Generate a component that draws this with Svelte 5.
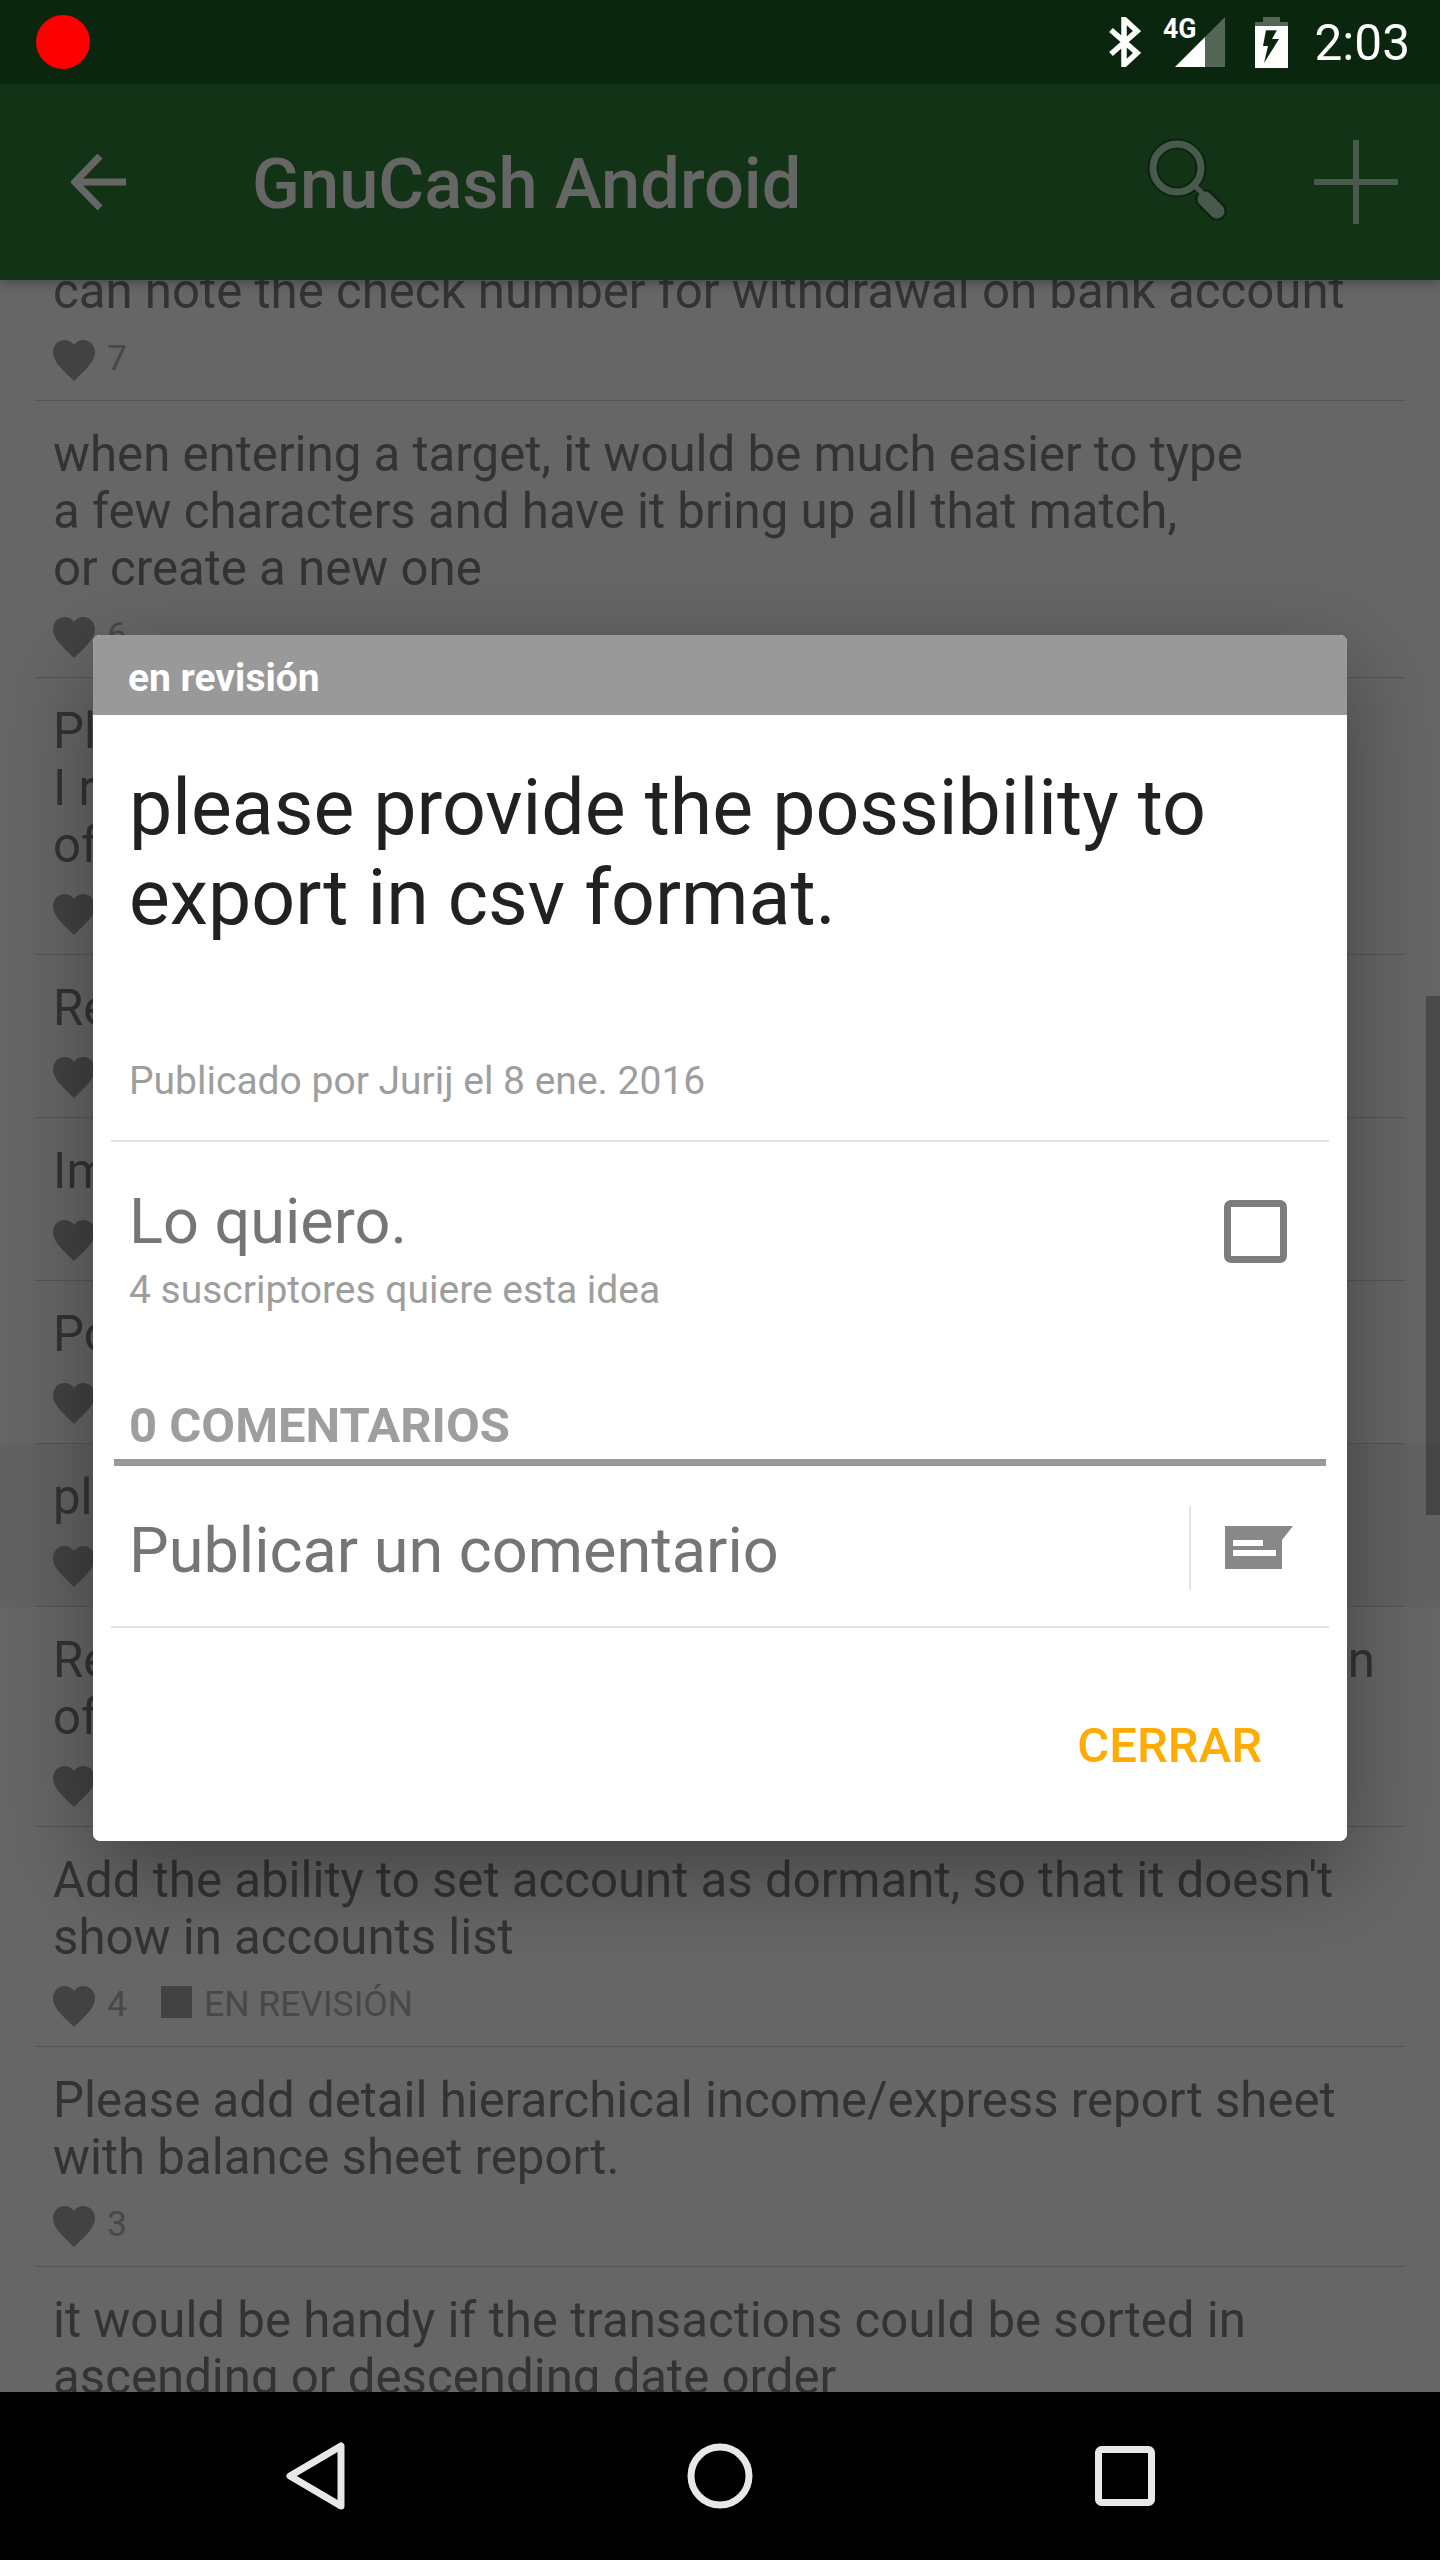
<script>
  const rows = [
    { lines: ['can note the check number for withdrawal on bank account'], votes: '7' },
    { lines: ['when entering a target, it would be much easier to type', 'a few characters and have it bring up all that match,', 'or create a new one'], votes: '6' },
    { lines: ['Pl', 'I r', 'of'] },
    { lines: ['Re'] },
    { lines: ['Im'] },
    { lines: ['Po'] },
    { lines: ['pl'], pressed: true },
    { lines: ['Re', 'of'], tail: 'n' },
    { lines: ["Add the ability to set account as dormant, so that it doesn't", 'show in accounts list'], votes: '4', status: 'EN REVISIÓN' },
    { lines: ['Please add detail hierarchical income/express report sheet', 'with balance sheet report.'], votes: '3' },
    { lines: ['it would be handy if the transactions could be sorted in', 'ascending or descending date order'] }
  ];
</script>

<div class="screen">
  <header class="status">
    <span class="rec"></span>
    <div class="status-icons">
      <svg class="bt" width="32" height="50" viewBox="0 0 32 50">
        <path d="M2 13 L28 36 L15 48 V2 L28 14 L2 37" fill="none" stroke="#fff" stroke-width="5.5" />
      </svg>
      <div class="signal">
        <span class="net">4G</span>
        <svg width="50" height="50" viewBox="0 0 50 50">
          <path d="M50 0 V50 H30 V20 Z" fill="#fff" opacity="0.3" />
          <path d="M0 50 L30 20 V50 Z" fill="#fff" />
        </svg>
      </div>
      <svg class="batt" width="33" height="51" viewBox="0 0 33 51">
        <path d="M8 0 H25 V5 H33 V14 H0 V5 H8 Z" fill="#fff" opacity="0.3" />
        <path d="M0 9 H33 V51 H0 Z M22 13 H11 L8 29 H13 L9 46 L24 22 H17 Z" fill="#fff" fill-rule="evenodd" />
      </svg>
      <span class="time">2:03</span>
    </div>
  </header>

  <div class="toolbar">
    <svg class="back" width="56" height="56" viewBox="0 0 56 56">
      <path d="M55 28 H6 M29 2 L4 28 L29 54" fill="none" stroke="#fff" stroke-width="7" />
    </svg>
    <h1>GnuCash Android</h1>
    <svg class="search" width="86" height="86" viewBox="0 0 86 86">
      <g fill="none" stroke="#1e5a28" stroke-linecap="round">
        <circle cx="32" cy="32" r="24" stroke-width="11" />
        <path d="M60 63 L72 75" stroke-width="20" />
      </g>
      <g fill="none" stroke="#b2e1bb" stroke-linecap="round">
        <circle cx="32" cy="32" r="24" stroke-width="7" />
        <path d="M50 50 L58 58" stroke-width="5" />
        <path d="M60 63 L72 75" stroke-width="15" />
      </g>
    </svg>
    <svg class="plus" width="84" height="84" viewBox="0 0 84 84">
      <path d="M42 0 V84 M0 42 H84" stroke="#b2e1bb" stroke-width="6" />
    </svg>
  </div>

  <main>
    <div class="list">
      {#each rows as row}
        <div class="row" class:pressed={row.pressed}>
          <div class="row-inner">
            {#each row.lines as line, i}
              <div class="line">
                <span>{line}</span>
                {#if row.tail && i === 0}<span>{row.tail}</span>{/if}
              </div>
            {/each}
            <div class="meta">
              <svg class="heart" width="42" height="41" viewBox="2 3 20 18.35" preserveAspectRatio="none">
                <path d="M12 21.35l-1.45-1.32C5.4 15.36 2 12.28 2 8.5 2 5.42 4.42 3 7.5 3c1.74 0 3.41.81 4.5 2.09C13.09 3.81 14.76 3 16.5 3 19.58 3 22 5.42 22 8.5c0 3.78-3.4 6.86-8.55 11.54L12 21.35z" />
              </svg>
              {#if row.votes}<span class="votes">{row.votes}</span>{/if}
              {#if row.status}
                <span class="status-square"></span>
                <span class="status-label">{row.status}</span>
              {/if}
            </div>
          </div>
        </div>
      {/each}
    </div>
    <div class="scrollbar"></div>
  </main>

  <nav>
    <svg width="60" height="70" viewBox="0 0 60 70">
      <path d="M4 35 L55 5 V65 Z" fill="none" stroke="#e8e8e8" stroke-width="7" stroke-linejoin="round" />
    </svg>
    <svg width="66" height="66" viewBox="0 0 66 66">
      <circle cx="33" cy="33" r="29" fill="none" stroke="#e8e8e8" stroke-width="7" />
    </svg>
    <svg width="60" height="60" viewBox="0 0 60 60">
      <rect x="3.5" y="3.5" width="53" height="53" rx="3" fill="none" stroke="#e8e8e8" stroke-width="7" />
    </svg>
  </nav>

  <div class="scrim">
    <section class="dialog">
      <div class="dialog-status">en revisión</div>
      <div class="dialog-title">please provide the possibility to export in csv format.</div>
      <div class="dialog-author">Publicado por Jurij el 8 ene. 2016</div>
      <div class="vote">
        <div>
          <div class="want">Lo quiero.</div>
          <div class="subs">4 suscriptores quiere esta idea</div>
        </div>
        <span class="check"></span>
      </div>
      <div class="comments-head">0 COMENTARIOS</div>
      <div class="comment-box">
        <span class="comment-input">Publicar un comentario</span>
        <span class="comment-send">
          <svg width="68" height="43" viewBox="0 0 68 43">
            <path d="M0 0 H68 L57 14 V43 H0 Z M8 14 V20 H38 V14 Z M8 24 V30 H51 V24 Z" fill="#888" fill-rule="evenodd" />
          </svg>
        </span>
      </div>
      <div class="dialog-actions">
        <span class="close">CERRAR</span>
      </div>
    </section>
  </div>
</div>

<style>
  :global(body) {
    margin: 0;
    background: #000;
  }

  .screen {
    position: relative;
    width: 1440px;
    height: 2560px;
    display: flex;
    flex-direction: column;
    overflow: hidden;
    font-family: Roboto, "Liberation Sans", sans-serif;
    background: #fff;
  }

  .status {
    position: relative;
    z-index: 3;
    height: 84px;
    flex: none;
    display: flex;
    align-items: center;
    justify-content: space-between;
    padding: 0 30px 0 36px;
    background: #0b260e;
  }

  .rec {
    width: 54px;
    height: 54px;
    border-radius: 50%;
    background: #f00;
  }

  .status-icons {
    display: flex;
    align-items: center;
  }

  .signal {
    position: relative;
    margin-left: 34px;
    width: 50px;
    height: 50px;
  }

  .signal svg {
    display: block;
  }

  .net {
    position: absolute;
    left: -12px;
    top: -1px;
    font-size: 28px;
    line-height: 26px;
    font-weight: 700;
    color: #fff;
    transform: scaleX(0.95);
    transform-origin: left;
  }

  .batt {
    margin-left: 30px;
  }

  .time {
    margin-left: 27px;
    margin-top: 2px;
    font-size: 49.5px;
    line-height: 58px;
    color: #fff;
  }

  .toolbar {
    position: relative;
    z-index: 1;
    height: 196px;
    flex: none;
    display: flex;
    align-items: center;
    background: #2f7f35;
    box-shadow: 0 2px 12px rgba(0, 0, 0, 0.35);
  }

  .back {
    margin-left: 71px;
  }

  h1 {
    margin: 4px 0 0 125px;
    flex: 1;
    font-size: 70.4px;
    line-height: 82px;
    font-weight: 500;
    color: #fff;
  }

  .search {
    margin-right: 83px;
    margin-top: -6px;
  }

  .plus {
    margin-right: 42px;
  }

  main {
    position: relative;
    flex: 1;
    overflow: hidden;
  }

  .list {
    margin-top: -42px;
  }

  .pressed {
    background: #f4f4f4;
  }

  .row-inner {
    margin: 0 35px;
    padding: 25px 30px 18px 18px;
    border-bottom: 1px solid #d6d6d6;
  }

  .line {
    display: flex;
    justify-content: space-between;
    font-size: 49.2px;
    line-height: 57px;
    color: #808080;
  }

  .meta {
    display: flex;
    align-items: center;
    height: 41px;
    margin-top: 20px;
    margin-bottom: 1px;
    font-size: 35.5px;
    color: #b4b4b4;
  }

  .heart {
    fill: #a6a6a6;
    flex: none;
  }

  .votes {
    margin-left: 12px;
    margin-bottom: 5px;
  }

  .status-square {
    width: 31px;
    height: 32px;
    margin-left: 34px;
    margin-top: -9px;
    background: #a6a6a6;
  }

  .status-label {
    margin-left: 12px;
    margin-bottom: 5px;
  }

  .scrollbar {
    position: absolute;
    right: 0;
    top: 716px;
    width: 14px;
    height: 519px;
    background: rgba(0, 0, 0, 0.28);
  }

  nav {
    position: relative;
    z-index: 3;
    height: 168px;
    flex: none;
    display: flex;
    align-items: center;
    background: #000;
  }

  nav svg:nth-child(1) {
    margin-left: 286px;
  }

  nav svg:nth-child(2) {
    margin-left: 341px;
  }

  nav svg:nth-child(3) {
    margin-left: 342px;
  }

  .scrim {
    position: absolute;
    z-index: 2;
    top: 84px;
    left: 0;
    right: 0;
    bottom: 168px;
    display: flex;
    align-items: center;
    justify-content: center;
    background: rgba(0, 0, 0, 0.6);
  }

  .dialog {
    width: 1254px;
    height: 1206px;
    border-radius: 7px;
    background: #fff;
    box-shadow: 0 30px 90px rgba(0, 0, 0, 0.35);
    overflow: hidden;
    display: flex;
    flex-direction: column;
  }

  .dialog-status {
    height: 80px;
    flex: none;
    box-sizing: border-box;
    padding: 0 35px;
    font-size: 39px;
    line-height: 86px;
    font-weight: 700;
    color: #fff;
    background: #999;
  }

  .dialog-title {
    padding: 48px 36px 0;
    height: 300px;
    flex: none;
    box-sizing: border-box;
    font-size: 77px;
    line-height: 90px;
    color: #212121;
  }

  .dialog-author {
    margin: 0 18px;
    padding: 44px 18px 36px;
    font-size: 39px;
    line-height: 45px;
    color: #9e9e9e;
    border-bottom: 2px solid #e4e4e4;
  }

  .vote {
    display: flex;
    align-items: flex-start;
    justify-content: space-between;
    padding: 0 60px 0 36px;
  }

  .want {
    margin-top: 43px;
    font-size: 63px;
    line-height: 74px;
    color: #757575;
  }

  .subs {
    margin-top: 9px;
    font-size: 39px;
    line-height: 45px;
    color: #9e9e9e;
  }

  .check {
    width: 49px;
    height: 49px;
    margin-top: 58px;
    border: 7px solid #7c7c7c;
    border-radius: 7px;
  }

  .comments-head {
    margin: 84px 21px 0;
    padding: 0 15px 4px;
    font-size: 49px;
    line-height: 58px;
    font-weight: 700;
    color: #9e9e9e;
    border-bottom: 7px solid #999;
    white-space: nowrap;
  }

  .comment-box {
    margin: 0 18px;
    height: 160px;
    display: flex;
    align-items: center;
    justify-content: space-between;
    padding-left: 18px;
    border-bottom: 2px solid #e4e4e4;
  }

  .comment-input {
    margin-top: 10px;
    font-size: 63px;
    line-height: 74px;
    color: #757575;
  }

  .comment-send {
    display: flex;
    height: 84px;
    margin-top: 4px;
    padding: 20px 36px 0 34px;
    box-sizing: border-box;
    border-left: 2px solid #e4e4e4;
  }

  .comment-send svg {
    display: block;
  }

  .dialog-actions {
    display: flex;
    justify-content: flex-end;
    padding: 89px 85px 0 0;
  }

  .close {
    font-size: 49px;
    line-height: 58px;
    font-weight: 500;
    color: #ffab00;
  }
</style>
